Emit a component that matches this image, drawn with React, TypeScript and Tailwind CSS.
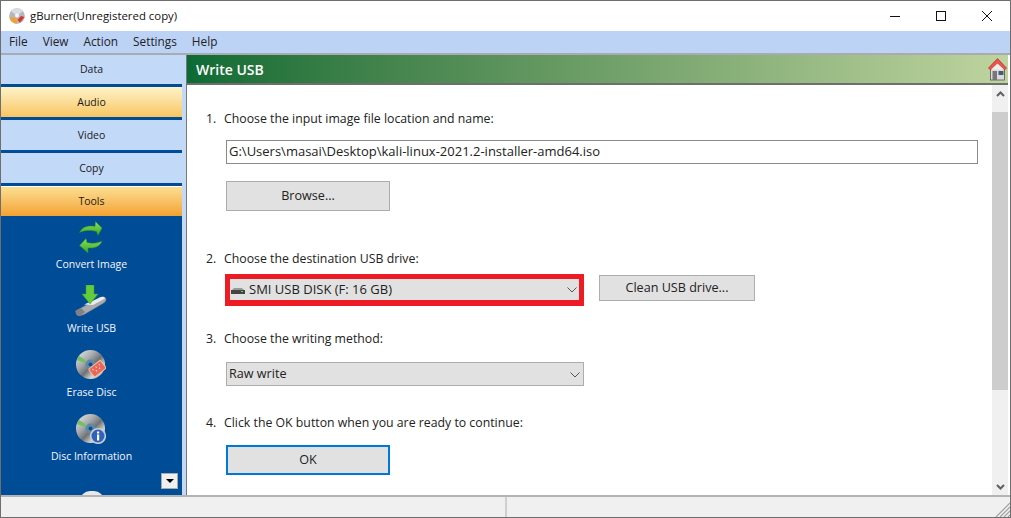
const font = { fontFamily: '"Open Sans", "Noto Sans", sans-serif' };

function DiscArt({ overlay }: { overlay: "erase" | "info" }) {
  const id = "d" + overlay;
  return (
    <svg width="30" height="30" viewBox="0 0 30 30" className="-ml-[2px]">
      <defs>
        <linearGradient id={id} x1="0" y1="0" x2="1" y2="1">
          <stop offset="0" stopColor="#eeeeee" />
          <stop offset="0.35" stopColor="#a9acae" />
          <stop offset="0.55" stopColor="#6f7375" />
          <stop offset="0.75" stopColor="#d9d9d9" />
          <stop offset="1" stopColor="#84878a" />
        </linearGradient>
      </defs>
      <circle cx="14.5" cy="14.5" r="14.5" fill={"url(#" + id + ")"} />
      <path d="M0.8 10 L9 13 L10 10.5 L3 6 Z" fill="#72c060" />
      <circle cx="14.5" cy="14.5" r="5" fill="#5d8aa8" />
      <circle cx="14.5" cy="14.5" r="2" fill="#0f4d8c" />
      {overlay === "erase" ? (
        <g transform="rotate(-38 21 19)">
          <rect x="14" y="14" width="15" height="10" rx="1.5" fill="#e8665c" stroke="#f2c2a0" strokeWidth="1" />
          <path d="M17 17h1M21 17h1M25 17h1M19 20h1M23 20h1" stroke="#ffe0c0" strokeWidth="1.6" />
        </g>
      ) : (
        <g>
          <circle cx="22" cy="22" r="7.3" fill="#2f62b8" stroke="#c9ccd0" strokeWidth="1.6" />
          <rect x="21" y="20.5" width="2.2" height="6" fill="#fff" />
          <rect x="21" y="17.5" width="2.2" height="2" fill="#fff" />
        </g>
      )}
    </svg>
  );
}

function Convert() {
  return (
    <svg width="24" height="32" viewBox="0 0 24 32" className="-ml-[2px]">
      <defs>
        <linearGradient id="cv" x1="0" y1="0" x2="0" y2="1">
          <stop offset="0" stopColor="#8fe05c" />
          <stop offset="1" stopColor="#33a824" />
        </linearGradient>
      </defs>
      <path d="M0.5 11.5 C3 6 9 4 16 5.5 L16.5 0.5 L23 7 L19 14.5 L17.5 10.5 C11 8.5 5 9.5 0.5 11.5Z" fill="url(#cv)" stroke="#2a8a22" strokeWidth="0.5" />
      <path d="M23 20 C21 26 15 27.5 9 27 L9 32 L0.5 24.5 L7 17.5 L8 21.5 C14 23 19 22 23 20Z" fill="url(#cv)" stroke="#2a8a22" strokeWidth="0.5" />
    </svg>
  );
}

function WriteUsb() {
  return (
    <svg width="32" height="32" viewBox="0 0 32 32" className="-ml-[2px]">
      <path d="M0.5 26 L22 14 Q29 10 31 13.5 Q32 16 28 18.5 L10 29 Q4 32 2 30 Z" fill="#a9acaf" stroke="#6f7275" strokeWidth="0.5" />
      <path d="M0.5 26 L6 23 L10 27 L5 31 Q2 31 1 29Z" fill="#7f8285" />
      <path d="M9 19.5 L22 14 Q29 10 30 13.5 L18 20Z" fill="#ececec" />
      <path d="M11 0 H19 V9 H23 L15 19 L7 9 H11Z" fill="#63cc3c" stroke="#3c9a24" strokeWidth="0.5" />
    </svg>
  );
}

function Home() {
  return (
    <svg width="19" height="23" viewBox="0 0 19 23">
      <rect x="2.5" y="10" width="14" height="12" fill="#d9dbde" stroke="#555" strokeWidth="0.8" />
      <rect x="4.5" y="13" width="4.5" height="9" fill="#777" />
      <rect x="10.5" y="13" width="5" height="4" fill="#4c5b70" />
      <path d="M9.5 0.5 L18.5 10 L16.5 12 L9.5 5.5 L2.5 12 L0.5 10 Z" fill="#ef5350" stroke="#a83030" strokeWidth="0.7" />
      <path d="M9.5 5.5 L16 11.5 H3 Z" fill="#f0efe8" />
    </svg>
  );
}

function Chevron() {
  return (
    <svg width="10" height="6" viewBox="0 0 10 6" className="shrink-0">
      <path d="M0.5 0.5 L5 5 L9.5 0.5" fill="none" stroke="#555" strokeWidth="1" />
    </svg>
  );
}

function Tab({ label, kind, short }: { label: string; kind: "blue" | "gold" | "tools"; short?: boolean }) {
  const bg =
    kind === "tools"
      ? "bg-gradient-to-b from-[#fbdf90] to-[#f3a22c] border-t border-white"
      : kind === "gold"
        ? "bg-gradient-to-b from-[#fdf3c8] to-[#f8c55f] pt-[1px]"
        : short
          ? "bg-[#c3d9f8]"
          : "bg-[#c3d9f8] pt-[1px]";
  return (
    <div className={(short ? "h-[29px] " : "h-[30px] ") + "shrink-0 flex items-center justify-center text-[10.5px] text-[#1a1a1a] " + bg}>
      {label}
    </div>
  );
}

function Tool({ icon, label }: { icon: React.ReactNode; label?: string }) {
  return (
    <div className="h-[64px] shrink-0 flex flex-col items-center text-[10.5px]">
      <div className="h-[32px] flex items-center justify-center">{icon}</div>
      <div className="mt-[3px] leading-[16px] text-[#f2f6fc]">{label}</div>
    </div>
  );
}

function Btn({ label, className, focus }: { label: string; className: string; focus?: boolean }) {
  return (
    <div
      className={
        "flex items-center justify-center bg-[#e1e1e1] text-[12.6px] text-[#222] " +
        className +
        (focus ? " border-2 border-[#0078d7]" : " border border-[#adadad]")
      }
    >
      {label}
    </div>
  );
}

function Step({ n, text }: { n: number; text: string }) {
  return (
    <div className="flex -ml-px text-[12.3px] leading-[18px] text-[#222]">
      <span className="w-[18px] shrink-0">{n}.</span>
      <span>{text}</span>
    </div>
  );
}

export default function App() {
  return (
    <div style={font} className="w-[1011px] h-[518px] bg-[#6e6e6e] p-[1px] overflow-hidden">
      <div className="w-full h-full bg-white flex flex-col">
        <div className="h-[30px] shrink-0 bg-white flex items-center">
          <svg width="16" height="16" viewBox="0 0 16 16" className="ml-[8px]">
            <circle cx="8" cy="8" r="7.8" fill="#b4b8be" />
            <path d="M2 3 A7.8 7.8 0 0 1 14 3 L8 8 Z" fill="#d9dde2" />
            <path d="M0.5 9 A7.8 7.8 0 0 0 8 15.8 L8 10 Z" fill="#eaa53a" />
            <path d="M15.5 9 L11 14.5 L8.5 12 L12 8 Z" fill="#d8342a" />
            <circle cx="8" cy="7.5" r="2" fill="#f6f6f6" />
          </svg>
          <div className="ml-[5px] text-[11.4px] text-[#111]">gBurner(Unregistered copy)</div>
          <div className="ml-auto flex h-full">
            <div className="w-[46px] flex items-center justify-center">
              <div className="w-[10px] h-[1px] bg-[#111]" />
            </div>
            <div className="w-[46px] flex items-center justify-center">
              <div className="w-[10px] h-[10px] border border-[#111]" />
            </div>
            <div className="w-[46px] flex items-center justify-center">
              <svg width="10" height="10" viewBox="0 0 10 10">
                <path d="M0 0 L10 10 M10 0 L0 10" stroke="#111" strokeWidth="1" />
              </svg>
            </div>
          </div>
        </div>
        <div className="h-[22px] shrink-0 bg-[#bcd3f6] flex items-center text-[11.8px] text-[#222] pl-[8px] gap-[15px]">
          <span>File</span>
          <span>View</span>
          <span>Action</span>
          <span>Settings</span>
          <span>Help</span>
        </div>
        <div className="h-[2px] shrink-0 bg-[#a8acb2]" />
        <div className="flex-1 flex min-h-0 bg-[#c3d9f8]">
          <div className="w-[181px] shrink-0 bg-[#004c97] flex flex-col gap-[3px] relative overflow-hidden">
            <Tab label="Data" kind="blue" short />
            <Tab label="Audio" kind="gold" />
            <Tab label="Video" kind="blue" />
            <Tab label="Copy" kind="blue" />
            <Tab label="Tools" kind="tools" />
            <div className="pt-[5px] -mt-[3px] shrink-0 flex flex-col">
              <Tool icon={<Convert />} label="Convert Image" />
              <Tool icon={<WriteUsb />} label="Write USB" />
              <Tool icon={<DiscArt overlay="erase" />} label="Erase Disc" />
              <Tool icon={<DiscArt overlay="info" />} label="Disc Information" />
              <div className="h-[40px] flex justify-center pt-[14px]">
                <div className="w-[24px] h-[10px] rounded-t-[10px] bg-[#e8e8e8]" />
              </div>
            </div>
            <div className="absolute right-[4px] bottom-[6px] w-[17px] h-[16px] bg-[#f0f0f0] border border-[#aaa] flex items-center justify-center">
              <div className="w-0 h-0 border-x-[4px] border-x-transparent border-t-[4px] border-t-black" />
            </div>
          </div>
          <div className="w-[4px] shrink-0" />
          <div className="flex-1 min-w-0 flex flex-col border-l border-[#777]">
            <div className="h-[28px] shrink-0 bg-gradient-to-r from-[#0a6b34] to-[#bfd49f] flex items-center justify-between text-white font-semibold text-[14px] pl-[9px] pr-[1px]">
              <span>Write USB</span>
              <Home />
            </div>
            <div className="h-[2px] shrink-0 bg-[#6e6e6e]" />
            <div className="flex-1 min-h-0 flex bg-white">
              <div className="flex-1 min-w-0 pl-[20px] pt-[25px]">
                <Step n={1} text="Choose the input image file location and name:" />
                <div className="mt-[12px] ml-[19px] mr-[14px] h-[24px] border border-[#8a8a8a] flex items-center pl-[2px] text-[13px] text-[#222]">
                  G:\Users\masai\Desktop\kali-linux-2021.2-installer-amd64.iso
                </div>
                <div className="mt-[17px] ml-[19px]">
                  <Btn label="Browse..." className="w-[164px] h-[30px] pt-[1px]" />
                </div>
                <div className="mt-[39px]">
                  <Step n={2} text="Choose the destination USB drive:" />
                </div>
                <div className="mt-[6px] ml-[18px] flex items-start">
                  <div className="w-[359px] h-[32px] border-[5px] border-b-[6px] border-[#ed1c24] bg-[#e1e1e1] flex items-center pl-[1px] pr-[2px] text-[13px] text-[#222]">
                    <svg width="14" height="6" viewBox="0 0 14 6" className="mr-[4px] mt-[2px]">
                      <path d="M1 2 L3 0 H11 L13 2Z" fill="#9a9a9a" />
                      <rect y="2" width="14" height="4" fill="#444" />
                      <rect x="10" y="3" width="2" height="1" fill="#5fd35f" />
                    </svg>
                    <span>SMI USB DISK (F: 16 GB)</span>
                    <span className="ml-auto"><Chevron /></span>
                  </div>
                  <div className="ml-[15px] mt-[1px]">
                    <Btn label="Clean USB drive..." className="w-[156px] h-[26px]" />
                  </div>
                </div>
                <div className="mt-[24px]">
                  <Step n={3} text="Choose the writing method:" />
                </div>
                <div className="mt-[14px] ml-[19px] w-[358px] h-[24px] border border-[#adadad] bg-[#e1e1e1] flex items-center pl-[2px] pr-[3px] pt-[1px] text-[12.6px] text-[#222]">
                  <span>Raw write</span>
                  <span className="ml-auto"><Chevron /></span>
                </div>
                <div className="mt-[28px]">
                  <Step n={4} text="Click the OK button when you are ready to continue:" />
                </div>
                <div className="mt-[13px] ml-[19px]">
                  <Btn label="OK" className="w-[164px] h-[30px] pt-[1px]" focus />
                </div>
              </div>
              <div className="w-[16px] shrink-0 bg-[#f0f0f0] flex flex-col">
                <div className="h-[27px] flex justify-center pt-[6px]">
                  <svg width="9" height="6" viewBox="0 0 9 6"><path d="M1 5 L4.5 1.5 L8 5" fill="none" stroke="#606060" strokeWidth="2" /></svg>
                </div>
                <div className="h-[278px] bg-[#cdcdcd]" />
                <div className="flex-1 flex items-end justify-center pb-[5px]">
                  <svg width="9" height="6" viewBox="0 0 9 6"><path d="M1 1 L4.5 4.5 L8 1" fill="none" stroke="#606060" strokeWidth="2" /></svg>
                </div>
              </div>
            </div>
          </div>
          <div className="w-[2px] shrink-0 bg-white" />
        </div>
        <div className="h-[22px] shrink-0 bg-[#f0f0f0] border-t-2 border-[#b4b4b4] flex relative">
          <div className="w-[506px] border-r-2 border-[#d0d0d0]" />
          <svg width="15" height="15" viewBox="0 0 15 15" className="absolute right-0 bottom-0">
            <path d="M15 1 L1 15 M15 5 L5 15 M15 9 L9 15 M15 13 L13 15" stroke="#a0a0a0" strokeWidth="1.2" />
          </svg>
        </div>
      </div>
    </div>
  );
}
